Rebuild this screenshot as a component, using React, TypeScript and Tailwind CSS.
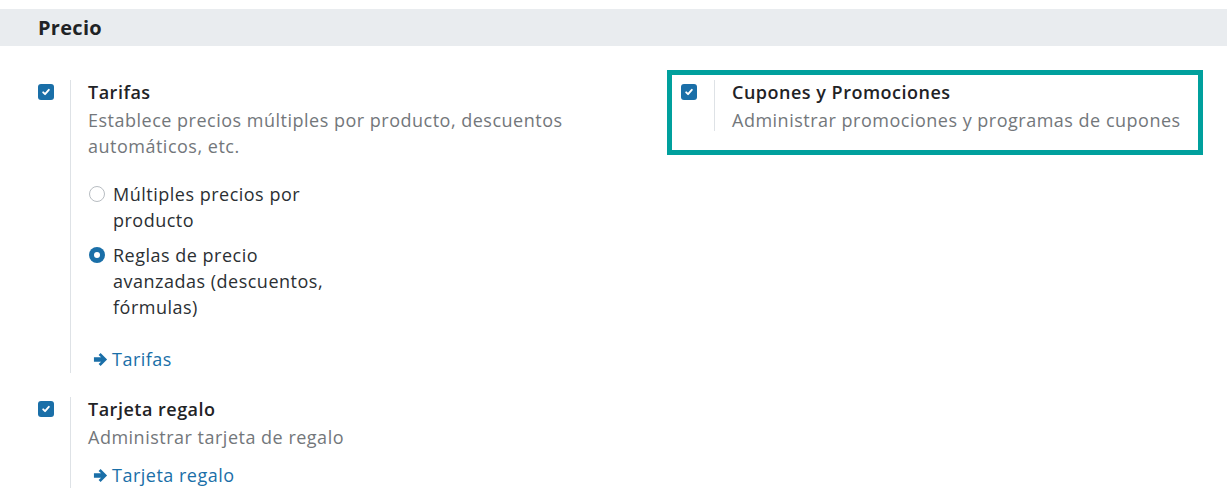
import React from 'react';

const font = { fontFamily: '"Open Sans", "Liberation Sans", sans-serif' };

const Check: React.FC = () => (
  <span className="w-4 h-4 rounded-[3px] bg-[#1a6fa8] flex items-center justify-center shrink-0">
    <svg viewBox="0 0 16 16" className="w-[10px] h-[10px]" fill="none" stroke="white" strokeWidth={3} strokeLinecap="round" strokeLinejoin="round">
      <path d="M3.5 8.5l3 3 6-7" />
    </svg>
  </span>
);

const Arrow: React.FC = () => (
  <svg viewBox="0 0 16 16" className="w-[15px] h-[15px] mr-[4px]" fill="#1a6fa8">
    <path d="M1 5.7h7.6L6 3.1 8.1 1 15 8l-6.9 7L6 12.9l2.6-2.6H1z" />
  </svg>
);

const Radio: React.FC<{ on?: boolean; label: string }> = ({ on, label }) => (
  <div className="flex items-start gap-[8px]">
    {on ? (
      <span className="mt-[5px] w-4 h-4 rounded-full bg-[#1a6fa8] flex items-center justify-center shrink-0">
        <span className="w-[6px] h-[6px] rounded-full bg-white" />
      </span>
    ) : (
      <span className="mt-[5px] w-4 h-4 rounded-full border border-[#b8bdc2] bg-white shrink-0" />
    )}
    <span className="w-[232px] text-[18px] tracking-[0.5px] leading-[26px] text-[#2b2f33]">{label}</span>
  </div>
);

export default function App() {
  return (
    <div className="w-[1227px] h-[494px] bg-white overflow-hidden pt-[9px]" style={font}>
      <div className="h-[37px] bg-[#e9ecef] flex items-center pl-[38px]">
        <h2 className="text-[20px] tracking-[0.3px] font-bold text-[#1f2326]">Precio</h2>
      </div>

      <div className="flex pl-[38px] pt-[34px]">
        <div className="w-[629px] flex flex-col gap-[24px]">
          <div className="flex">
            <div className="w-[32px] pt-[4px]"><Check /></div>
            <div className="border-l border-[#dee2e6] pl-[17px] pb-[1px] w-[560px]">
              <div className="text-[18px] tracking-[0.5px] leading-[24px] font-semibold text-[#1f2326]">Tarifas</div>
              <div className="mt-[3px] text-[18px] tracking-[0.5px] leading-[26px] text-[#73777b] w-[500px]">
                Establece precios múltiples por producto, descuentos automáticos, etc.
              </div>
              <div className="mt-[22px] ml-[1px] flex flex-col gap-[9px]">
                <Radio label="Múltiples precios por producto" />
                <Radio on label="Reglas de precio avanzadas (descuentos, fórmulas)" />
              </div>
              <a className="mt-[26px] flex items-center text-[18px] tracking-[0.5px] leading-[26px] text-[#1a6fa8] ml-[5px]">
                <Arrow />Tarifas
              </a>
            </div>
          </div>

          <div className="flex">
            <div className="w-[32px] pt-[4px]"><Check /></div>
            <div className="border-l border-[#dee2e6] pl-[17px]">
              <div className="text-[18px] tracking-[0.5px] leading-[24px] font-semibold text-[#1f2326]">Tarjeta regalo</div>
              <div className="mt-[3px] text-[18px] tracking-[0.5px] leading-[26px] text-[#73777b]">Administrar tarjeta de regalo</div>
              <a className="mt-[12px] flex items-center text-[18px] tracking-[0.5px] leading-[26px] text-[#1a6fa8] ml-[5px]">
                <Arrow />Tarjeta regalo
              </a>
            </div>
          </div>
        </div>

        <div className="-mt-[10px] w-[536px] h-[85px] border-[5px] border-[#00a09d] flex pl-[9px] pt-[5px]">
          <div className="w-[33px] pt-[4px]"><Check /></div>
          <div className="border-l border-[#dee2e6] pl-[17px] h-[51px]">
            <div className="text-[18px] tracking-[0.5px] leading-[24px] font-semibold text-[#1f2326]">Cupones y Promociones</div>
            <div className="mt-[3px] text-[18px] tracking-[0.5px] leading-[26px] text-[#73777b] whitespace-nowrap">
              Administrar promociones y programas de cupones
            </div>
          </div>
        </div>
      </div>
    </div>
  );
}
